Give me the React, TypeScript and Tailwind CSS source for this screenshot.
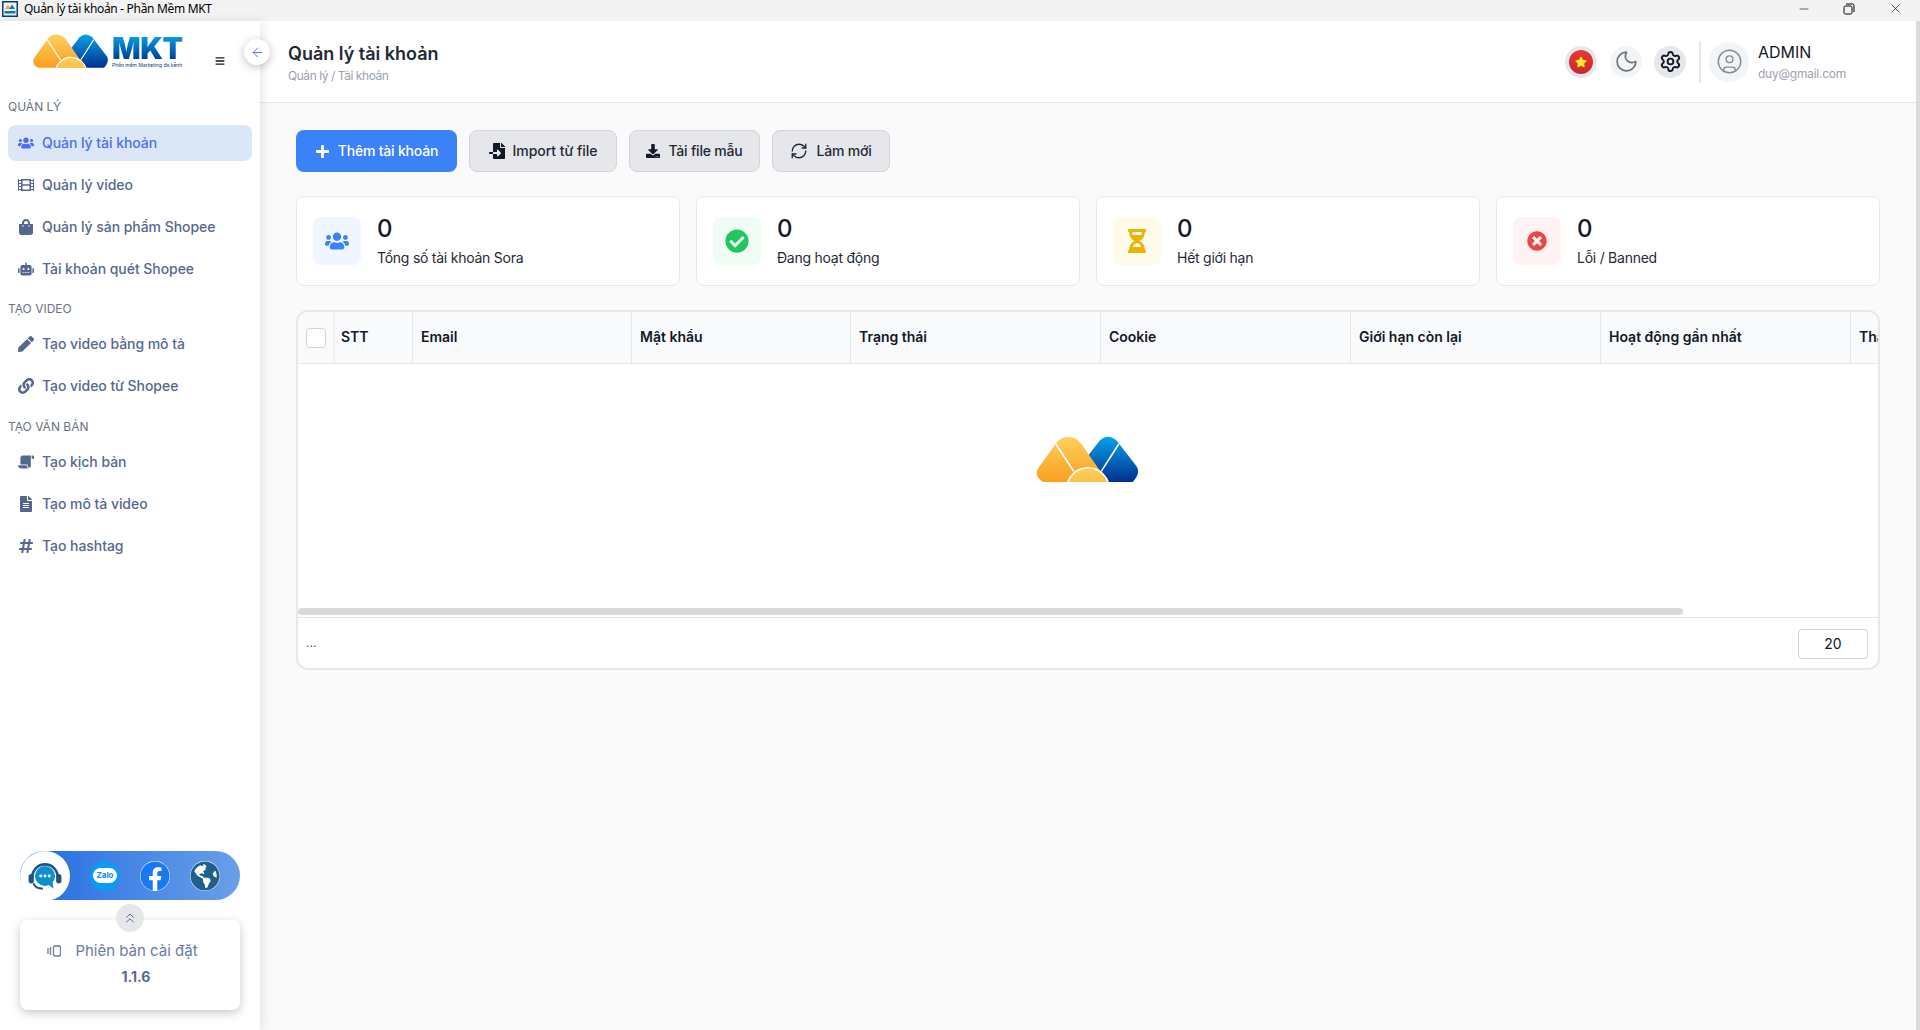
import React from "react";
import { FaUsers, FaFilm, FaShoppingBag, FaRobot, FaPen, FaLink, FaScroll, FaFileAlt, FaHashtag, FaPlus, FaFileImport, FaDownload, FaCheckCircle, FaHourglassHalf, FaTimesCircle, FaBars, FaStar, FaFacebook, FaGlobeAmericas } from "react-icons/fa";
import { ArrowLeft, ChevronsUp, CircleUser, Minus, Moon, RefreshCw, Settings, X } from "lucide-react";

function Mountains({ id, className }: { id: string; className: string }) {
  return (
    <svg viewBox="105 45 320 142" className={className}>
      <defs>
        <linearGradient id={`${id}o`} x1="0" y1="0" x2="0" y2="1">
          <stop offset="0" stopColor="#fdd05e" />
          <stop offset="1" stopColor="#f99f1f" />
        </linearGradient>
        <linearGradient id={`${id}b`} x1="0" y1="0" x2="0" y2="1">
          <stop offset="0" stopColor="#05a4ea" />
          <stop offset="1" stopColor="#022f8e" />
        </linearGradient>
      </defs>
      <path d="M265 108 L300 62 Q325 38 352 62 L412 140 Q425 160 400 187 L310 187 Z" fill={`url(#${id}b)`} />
      <path d="M170 68 Q190 42 225 55 Q236 59 245 72 L325 187 L130 187 Q100 170 115 145 Z" fill={`url(#${id}o)`} />
      <path d="M168 72 L222 155 M358 72 L305 155" stroke="#fff" strokeWidth="5" fill="none" />
      <circle cx="265" cy="208" r="64" fill={`url(#${id}o)`} stroke="#fff" strokeWidth="5" />
    </svg>
  );
}

function NavItem({ icon, label, active }: { icon: React.ReactNode; label: string; active?: boolean }) {
  return (
    <div className={`flex h-9 items-center gap-2 rounded-lg px-[10px] text-sm font-medium tracking-[-0.05px] ${active ? "bg-[#dbe7f7] text-[#4f6ef0]" : "text-[#56678f]"}`}>
      <span className="flex w-4 justify-center text-[16px]">{icon}</span>
      <span className="pb-[1px]">{label}</span>
    </div>
  );
}

function Label({ children }: { children: React.ReactNode }) {
  return <div className="flex h-[18px] items-center text-xs text-[#6b7280]">{children}</div>;
}

function ActionButton({ icon, label, primary, className }: { icon: React.ReactNode; label: string; primary?: boolean; className: string }) {
  return (
    <div className={`flex h-[42px] items-center justify-center gap-[8px] rounded-lg text-sm font-medium ${className} ${primary ? "bg-[#3b82f6] text-white" : "border border-[#d1d5db] bg-[#e5e7eb] text-[#1f2937]"}`}>
      {icon}
      <span className="pb-[1px]">{label}</span>
    </div>
  );
}

function Stat({ icon, bg, label }: { icon: React.ReactNode; bg: string; label: string }) {
  return (
    <div className="flex h-[90px] items-center gap-4 rounded-lg border border-[#e5e7eb] bg-white px-4">
      <div className={`flex h-12 w-12 items-center justify-center rounded-lg ${bg}`}>{icon}</div>
      <div className="flex flex-col pt-[1px]">
        <div className="text-2xl leading-7 font-medium text-[#111827]">0</div>
        <div className="mt-[5px] text-sm leading-5 tracking-[-0.25px] text-[#1f2937]">{label}</div>
      </div>
    </div>
  );
}

function Th({ className, children }: { className: string; children?: React.ReactNode }) {
  return <div className={`flex shrink-0 items-center border-r border-[#e5e7eb] px-2 pb-[1px] text-sm font-semibold whitespace-nowrap text-[#111827] ${className}`}>{children}</div>;
}

function Headset() {
  return (
    <svg viewBox="0 0 34 34" className="h-9 w-9">
      <path d="M5 18 A12 12 0 0 1 29 18" fill="none" stroke="#1d5580" strokeWidth="2.5" />
      <rect x="1.5" y="15" width="5" height="9" rx="2.5" fill="#1d5580" />
      <rect x="27.5" y="15" width="5" height="9" rx="2.5" fill="#1d5580" />
      <path d="M6 24 Q8 29 15 29" fill="none" stroke="#1d5580" strokeWidth="2" />
      <circle cx="17" cy="17" r="9.5" fill="#0f8ed0" />
      <path d="M20 25 L25 29 L24 21 Z" fill="#0f8ed0" />
      <circle cx="13" cy="17" r="1.4" fill="#fff" />
      <circle cx="17" cy="17" r="1.4" fill="#fff" />
      <circle cx="21" cy="17" r="1.4" fill="#fff" />
    </svg>
  );
}

export default function App() {
  return (
    <div className="flex h-[1030px] w-full flex-col overflow-hidden bg-[#fafafa] font-['Inter',sans-serif]">
      <div className="flex h-[21px] shrink-0 items-start bg-[#f3f3f3] pl-[2px] text-black">
        <svg viewBox="0 0 16 16" className="mt-[1px] h-4 w-4">
          <rect width="16" height="16" fill="#12396b" />
          <rect x="1.5" y="1.5" width="13" height="13" fill="#e8f3fb" />
          <path d="M3 8 L6 3.5 L8.5 8 Z" fill="#f5a623" />
          <path d="M7 8 L10 3.5 L13 8 Z" fill="#1673c4" />
          <rect x="2.5" y="10" width="11" height="2.5" fill="#1673c4" />
        </svg>
        <span className="ml-[6px] font-['Noto_Sans',sans-serif] text-xs leading-[18px] tracking-[-0.32px]">Quản lý tài khoản - Phần Mềm MKT</span>
        <div className="ml-auto flex items-center pt-[1px] pr-[17px]">
          <Minus className="h-[14px] w-[14px]" strokeWidth={1} />
          <svg viewBox="0 0 12 12" className="ml-[32px] h-[12px] w-[12px]" fill="none" stroke="#000" strokeWidth="1">
            <rect x="1" y="3" width="8" height="8" rx="1.5" />
            <path d="M3 1 H9.5 Q11 1 11 2.5 V9" />
          </svg>
          <X className="ml-[33px] h-[15px] w-[15px]" strokeWidth={1} />
        </div>
      </div>

      <div className="flex min-h-0 flex-1">
        <aside className="relative z-10 flex w-[260px] shrink-0 flex-col bg-white shadow-[2px_0_10px_rgba(0,0,0,0.1)]">
          <div className="flex h-[68px] shrink-0 items-start pt-3 pl-[32px]">
            <Mountains id="side" className="h-[35px] w-[78px]" />
            <div className="ml-[2px] flex flex-col">
              <div className="mt-[2px] bg-gradient-to-b from-[#12a0e6] to-[#033a96] bg-clip-text text-[30px] leading-[26px] font-black tracking-[-0.5px] text-transparent">MKT</div>
              <div className="mt-[1px] text-[5px] leading-[7px] whitespace-nowrap text-[#173a7a]">Phần mềm Marketing đa kênh</div>
            </div>
            <FaBars className="mt-[23px] ml-[32px] text-[10px] text-[#111827]" />
          </div>
          <div className="absolute top-[18px] -right-[10px] flex h-[26px] w-[26px] items-center justify-center rounded-full bg-white shadow-[0_2px_8px_rgba(0,0,0,0.25)]">
            <ArrowLeft className="h-[15px] w-[15px] text-[#4f6ef0]" strokeWidth={1.5} />
          </div>

          <div className="mt-[9px] flex flex-col px-2">
            <Label>QUẢN LÝ</Label>
            <div className="mt-[9px] flex flex-col gap-[6px]">
              <NavItem active icon={<FaUsers />} label="Quản lý tài khoản" />
              <NavItem icon={<FaFilm />} label="Quản lý video" />
              <NavItem icon={<FaShoppingBag />} label="Quản lý sản phẩm Shopee" />
              <NavItem icon={<FaRobot />} label="Tài khoản quét Shopee" />
            </div>
            <div className="mt-[13px]"><Label>TẠO VIDEO</Label></div>
            <div className="mt-[8px] flex flex-col gap-[6px]">
              <NavItem icon={<FaPen />} label="Tạo video bằng mô tả" />
              <NavItem icon={<FaLink />} label="Tạo video từ Shopee" />
            </div>
            <div className="mt-[14px]"><Label>TẠO VĂN BẢN</Label></div>
            <div className="mt-[8px] flex flex-col gap-[6px]">
              <NavItem icon={<FaScroll className="-scale-x-100" />} label="Tạo kịch bản" />
              <NavItem icon={<FaFileAlt />} label="Tạo mô tả video" />
              <NavItem icon={<FaHashtag />} label="Tạo hashtag" />
            </div>
          </div>

          <div className="mt-auto flex flex-col px-5 pb-[20px]">
            <div className="flex h-[49px] items-center rounded-full bg-gradient-to-r from-[#1d6ae0] to-[#6a9fe8]">
              <div className="flex h-[50px] w-[50px] items-center justify-center rounded-full bg-white">
                <Headset />
              </div>
              <div className="ml-[20px] flex h-[30px] w-[30px] items-center justify-center rounded-full bg-[#0a9bf5]">
                <div className="rounded-[8px] bg-white px-[3px] text-[8px] leading-[15px] font-bold text-[#0a8bf0]">Zalo</div>
              </div>
              <div className="ml-[20px] flex h-[30px] w-[30px] items-center justify-center rounded-full bg-white">
                <FaFacebook className="text-[30px] text-[#1877f2]" />
              </div>
              <div className="ml-[20px] flex h-[30px] w-[30px] items-center justify-center rounded-full bg-white">
                <FaGlobeAmericas className="text-[30px] text-[#1f5f8b]" />
              </div>
            </div>
            <div className="relative mt-[20px] flex h-[90px] flex-col items-center rounded-lg bg-white pt-[20px] shadow-[0_3px_10px_rgba(0,0,0,0.22)]">
              <div className="absolute -top-[16px] left-[96px] flex h-7 w-7 items-center justify-center rounded-full bg-[#e5e7eb]">
                <ChevronsUp className="h-[16px] w-[16px] text-[#56678f]" strokeWidth={1.5} />
              </div>
              <div className="flex items-center pr-[15px] text-[15px] leading-[22px] text-[#6b7a9f]">
                <svg viewBox="0 0 14 12" className="mr-[14px] h-3 w-[14px]" fill="none" stroke="#6b7a9f" strokeWidth="1.3">
                  <rect x="6.5" y="1" width="7" height="10" rx="1.5" />
                  <path d="M1 3 V9 M3.5 2 V10" />
                </svg>
                Phiên bản cài đặt
              </div>
              <div className="mt-[5px] pl-3 text-sm leading-5 font-bold text-[#56678f]">1.1.6</div>
            </div>
          </div>
        </aside>

        <main className="flex min-w-0 flex-1 flex-col">
          <header className="flex h-[82px] shrink-0 items-center border-b border-[#e5e7eb] bg-white pr-[16px] pl-[28px]">
            <div className="flex flex-col">
              <div className="text-lg leading-7 font-semibold text-[#1f2937]">Quản lý tài khoản</div>
              <div className="text-xs leading-4 tracking-[-0.45px] text-[#9ca3af]">Quản lý / Tài khoản</div>
            </div>
            <div className="ml-auto flex items-center">
              <div className="flex h-8 w-8 items-center justify-center rounded-full bg-[#e5e7eb]">
                <div className="flex h-6 w-6 items-center justify-center rounded-full bg-gradient-to-b from-[#e53935] to-[#c92a2a]">
                  <FaStar className="text-[12px] text-[#fde92b]" />
                </div>
              </div>
              <div className="ml-[13px] flex h-8 w-8 items-center justify-center rounded-full bg-[#f3f4f6]">
                <Moon className="h-[25px] w-[25px] text-[#6b7280]" strokeWidth={1.6} />
              </div>
              <div className="ml-3 flex h-8 w-8 items-center justify-center rounded-full bg-[#e5e7eb]">
                <Settings className="h-[23px] w-[23px] text-[#111827]" strokeWidth={2} />
              </div>
              <div className="ml-[13px] h-[42px] w-[2px] bg-[#e5e7eb]" />
              <div className="ml-[8px] flex h-10 w-10 items-center justify-center rounded-full bg-[#f3f4f6]">
                <CircleUser className="h-[27px] w-[27px] text-[#858b96]" strokeWidth={1.25} />
              </div>
              <div className="ml-[9px] flex w-[142px] flex-col">
                <div className="text-base leading-6 text-[#111827]">ADMIN</div>
                <div className="text-xs leading-5 tracking-[-0.25px] text-[#9ca3af]">duy@gmail.com</div>
              </div>
            </div>
          </header>

          <div className="flex flex-col px-9 pt-[27px]">
            <div className="flex gap-3">
              <ActionButton primary className="w-[161px] tracking-[-0.2px]" icon={<FaPlus className="text-[15px]" />} label="Thêm tài khoản" />
              <ActionButton className="w-[148px] tracking-[-0.05px]" icon={<FaFileImport className="text-[16px] text-[#111827]" />} label="Import từ file" />
              <ActionButton className="w-[131px] tracking-[-0.2px]" icon={<FaDownload className="text-[14px] text-[#111827]" />} label="Tải file mẫu" />
              <ActionButton className="w-[118px] tracking-[-0.2px]" icon={<RefreshCw className="h-[18px] w-[18px] text-[#1f2937]" strokeWidth={1.75} />} label="Làm mới" />
            </div>

            <div className="mt-6 grid grid-cols-4 gap-4">
              <Stat bg="bg-[#eff6ff]" icon={<FaUsers className="text-[24px] text-[#3b82f6]" />} label="Tổng số tài khoản Sora" />
              <Stat bg="bg-[#f0fdf4]" icon={<FaCheckCircle className="text-[24px] text-[#22c55e]" />} label="Đang hoạt động" />
              <Stat bg="bg-[#fefce8]" icon={<FaHourglassHalf className="text-[24px] text-[#eab308]" />} label="Hết giới hạn" />
              <Stat bg="bg-[#fef2f2]" icon={<FaTimesCircle className="text-[20px] text-[#ef4444]" />} label="Lỗi / Banned" />
            </div>

            <div className="mt-6 flex h-[360px] flex-col overflow-hidden rounded-xl border-2 border-[#e5e7eb] bg-white">
              <div className="flex h-[52px] shrink-0 overflow-hidden border-b border-[#e5e7eb] bg-[#f9fafb]">
                <div className="flex w-[35px] shrink-0 items-center justify-center shadow-[2px_0_3px_rgba(0,0,0,0.05)]">
                  <div className="h-5 w-5 rounded border border-[#d1d5db] bg-white" />
                </div>
                <Th className="w-[80px]">STT</Th>
                <Th className="w-[219px]">Email</Th>
                <Th className="w-[219px]">Mật khẩu</Th>
                <Th className="w-[250px]">Trạng thái</Th>
                <Th className="w-[250px]">Cookie</Th>
                <Th className="w-[250px]">Giới hạn còn lại</Th>
                <Th className="w-[250px]">Hoạt động gần nhất</Th>
                <Th className="w-[200px]">Thao tác</Th>
              </div>
              <div className="flex flex-1 flex-col">
                <div className="flex h-[118px] items-end justify-center">
                  <Mountains id="empty" className="h-[47px] w-[106px]" />
                </div>
                <div className="mt-auto mb-[1px] h-[7px] w-[1385px] rounded-full bg-[#d9d9d9]" />
              </div>
              <div className="mt-[1px] flex h-[51px] shrink-0 items-center justify-between border-t border-[#e5e7eb] pr-[10px] pl-[8px]">
                <span className="text-xs text-[#4b5563]">...</span>
                <div className="mt-[1px] flex h-[30px] w-[70px] items-center justify-center rounded border border-[#d1d5db] text-sm text-[#111827]">20</div>
              </div>
            </div>
          </div>
        </main>
        <div className="w-1 shrink-0 bg-[#dcdcdc]" />
      </div>
    </div>
  );
}
